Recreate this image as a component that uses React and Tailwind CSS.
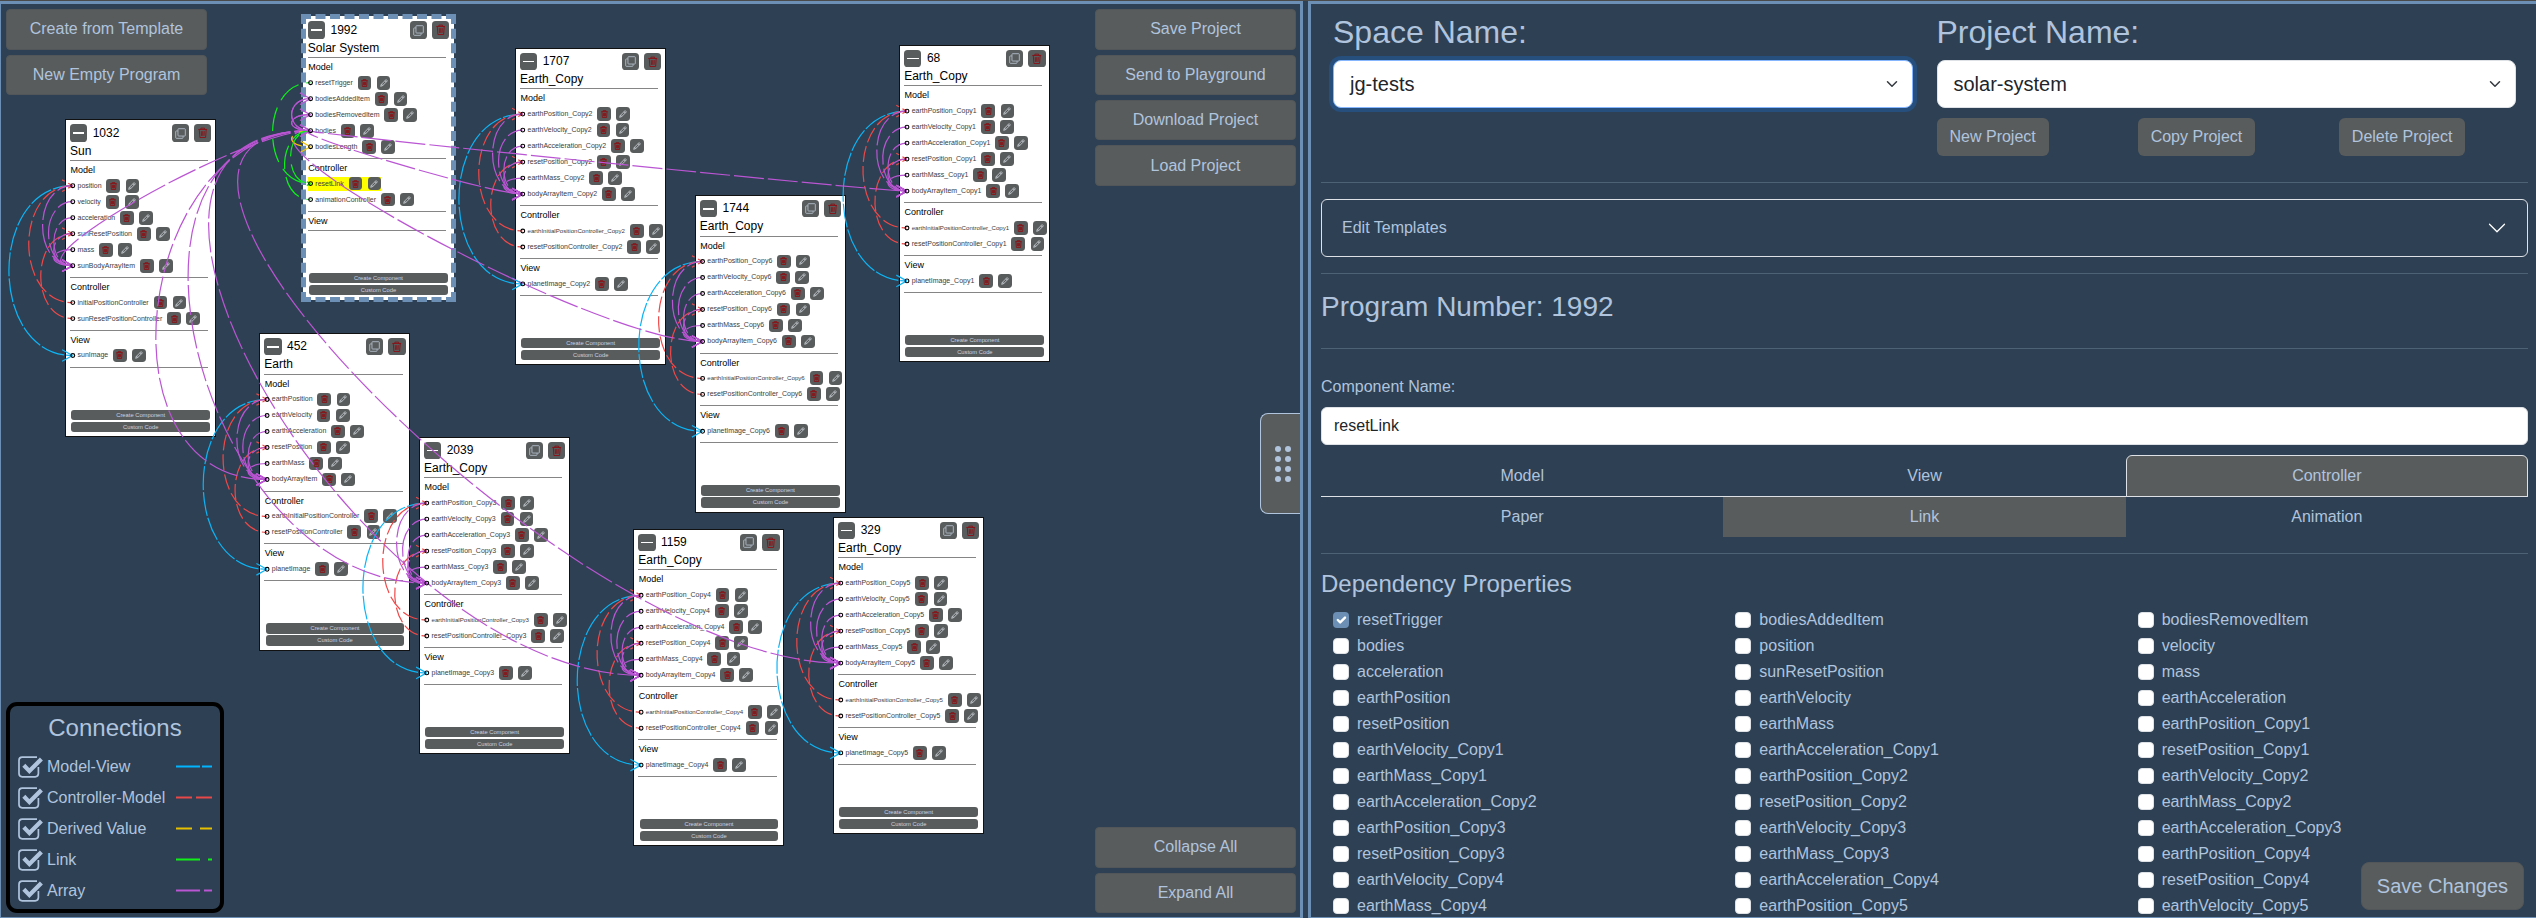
import React from "react";

const earthModel = (s) => [
  "earthPosition" + s,
  "earthVelocity" + s,
  "earthAcceleration" + s,
  "resetPosition" + s,
  "earthMass" + s,
  "bodyArrayItem" + s,
];

const earthCard = (id, title, x, y, s) => ({
  id,
  title,
  x,
  y,
  model: earthModel(s),
  controller: ["earthInitialPositionController" + s, "resetPositionController" + s],
  view: ["planetImage" + s],
});

const cards = [
  {
    id: "1032",
    title: "Sun",
    x: 65,
    y: 119.4,
    model: ["position", "velocity", "acceleration", "sunResetPosition", "mass", "sunBodyArrayItem"],
    controller: ["initialPositionController", "sunResetPositionController"],
    view: ["sunImage"],
  },
  {
    id: "1992",
    title: "Solar System",
    x: 302.8,
    y: 16.4,
    model: ["resetTrigger", "bodiesAddedItem", "bodiesRemovedItem", "bodies", "bodiesLength"],
    controller: ["resetLink", "animationController"],
    view: [],
    selected: true,
    active: "resetLink",
  },
  earthCard("1707", "Earth_Copy", 515, 47.8, "_Copy2"),
  earthCard("68", "Earth_Copy", 899.2, 44.8, "_Copy1"),
  earthCard("1744", "Earth_Copy", 694.8, 195.2, "_Copy6"),
  earthCard("452", "Earth", 259.3, 333.2, ""),
  earthCard("2039", "Earth_Copy", 419, 436.8, "_Copy3"),
  earthCard("1159", "Earth_Copy", 633.3, 529, "_Copy4"),
  earthCard("329", "Earth_Copy", 833, 516.8, "_Copy5"),
];

const ports = {};
cards.forEach((c) => {
  let top = c.y + 41;
  [c.model, c.controller, c.view].forEach((rows) => {
    rows.forEach((name, i) => {
      ports[name] = { x: c.x + 7.6, y: top + 25.3 + 16 * i };
    });
    top += rows.length ? 20.9 + 16 * rows.length : 19;
  });
});

const kinds = {
  mv: { color: "#0db4f5", dash: "24 2", offset: 4 },
  cm: { color: "#f04848", dash: "16 4", offset: 11 },
  dv: { color: "#f5c400", dash: "16 8", offset: 5 },
  link: { color: "#0cf01c", dash: "24 8", offset: 20 },
  array: { color: "#ba55d3", dash: "30 4", offset: 14 },
};

const links = [];
cards.forEach((c) => {
  if (c.selected) return;
  const target = c.model[5];
  links.push(["mv", c.model[0], c.view[0]]);
  links.push(["cm", c.controller[0], c.model[0]]);
  links.push(["cm", c.controller[1], c.model[3]]);
  c.model.slice(0, 5).forEach((m) => links.push(["array", m, target]));
  links.push(["array", "bodies", target]);
});
links.push(
  ["dv", "bodies", "bodiesLength"],
  ["link", "resetTrigger", "resetLink"],
  ["link", "bodies", "resetLink"],
  ["link", "animationController", "bodies"],
  ["array", "bodiesAddedItem", "bodies"],
  ["array", "bodiesRemovedItem", "bodies"],
  ["array", "bodies", "bodiesAddedItem"],
  ["array", "bodies", "bodiesRemovedItem"]
);

function Wires() {
  return (
    <svg className="pointer-events-none absolute inset-0 h-full w-full" viewBox="1 4 1299 913" fill="none" strokeWidth="1.2">
      {links.map(([kind, from, to], i) => {
        const a = ports[from];
        const b = ports[to];
        const k = kinds[kind];
        const d = Math.max(Math.abs(b.y - a.y) / 2, 25);
        return (
          <g key={i} stroke={k.color} strokeDasharray={k.dash} strokeDashoffset={k.offset}>
            <path d={`M${a.x} ${a.y}C${a.x - d} ${a.y} ${b.x - d} ${b.y} ${b.x} ${b.y}`} />
            <path d={`M${b.x} ${b.y}L${b.x - 10.5} ${b.y - 5.8}M${b.x} ${b.y}L${b.x - 10.5} ${b.y + 5.8}`} />
          </g>
        );
      })}
      {Object.entries(ports).map(([name, p]) => (
        <circle key={name} cx={p.x + 0.2} cy={p.y} r="1.9" stroke="#000" strokeWidth="1.1" />
      ))}
    </svg>
  );
}

function Trash({ className, heavy }) {
  return (
    <svg viewBox="1 0 14 16" className={className} fill="none" stroke="#8b0f14" strokeWidth={heavy ? 1.7 : 1.3}>
      <path d="M1.5 3.2h13M5.3 3V1.2h5.4V3M2.9 3.4l.9 11.6h8.4l.9-11.6M5.8 5.6l.3 7M8 5.6v7M10.2 5.6l-.3 7" />
    </svg>
  );
}

function Copy({ className }) {
  return (
    <svg viewBox="0 0 16 16" className={className} fill="none" stroke="#c3d0e0" strokeWidth="1.1">
      <rect x="4.3" y="1" width="10.7" height="10.7" rx="1" />
      <path d="M4 4.3H2a1 1 0 0 0-1 1V14a1 1 0 0 0 1 1h8.7a1 1 0 0 0 1-1v-2" />
    </svg>
  );
}

function Pencil({ className }) {
  return (
    <svg viewBox="0 0 16 16" className={className} fill="none" stroke="#e4eaf2" strokeWidth="1.4" strokeLinejoin="round">
      <path d="M12.2 1.2l2.6 2.6L5.4 13.2l-4 1.4 1.4-4zM10 3.6l2.5 2.5M3.2 10.4l2.4 2.4" />
    </svg>
  );
}

function Row({ name, active }) {
  const small = name.startsWith("earthInitial") && name.includes("_");
  return (
    <div className="flex h-4 items-center">
      <div className={"flex h-[14px] items-center " + (active ? "bg-[#ffff00]" : "")}>
        <span className={"ml-[7.5px] whitespace-nowrap leading-[14px] text-[#3c3c3c] " + (small ? "text-[6.12px]" : "text-[7px]")}>{name}</span>
        <span className="ml-[4.8px] flex h-[13.8px] w-[13.8px] shrink-0 items-center justify-center rounded-[3.4px] bg-[#595c5c]">
          <Trash heavy className="h-[8px] w-[7px]" />
        </span>
        <span className="ml-[5.3px] flex h-[13.8px] w-[13.8px] shrink-0 items-center justify-center rounded-[3.4px] bg-[#595c5c]">
          <Pencil className="h-[8px] w-[8px]" />
        </span>
      </div>
    </div>
  );
}

function Section({ label, rows, active }) {
  return (
    <div className={rows.length ? "pb-[3.1px]" : "pb-[1.2px]"}>
      <div className="h-px w-[138.3px] bg-[#858585]" />
      <div className="h-[16.8px] pl-[0.4px] text-[9px] leading-[18px] text-black">{label}</div>
      {rows.map((r) => (
        <Row key={r} name={r} active={r === active} />
      ))}
    </div>
  );
}

function Card({ card }) {
  const tile = "flex h-[17.3px] w-[17.3px] items-center justify-center rounded-[3.6px] bg-[#595c5c]";
  return (
    <div
      className={"absolute w-[151px] border bg-white pb-[4px] pl-1 pt-[4px] " + (card.selected ? "border-white" : "border-[#111]")}
      style={{ left: card.x - 1, top: card.y - 4 }}
    >
      <div className="flex h-[17.3px] items-center pr-[3.6px]">
        <span className={tile}>
          <span className="h-[1.6px] w-[11.5px] bg-white" />
        </span>
        <span className="ml-[5.4px] flex-1 text-[12px] leading-[17px] text-black">{card.id}</span>
        <span className={tile}>
          <Copy className="h-[11px] w-[11px]" />
        </span>
        <span className={tile + " ml-[5px]"}>
          <Trash className="h-[11.5px] w-[9.5px]" />
        </span>
      </div>
      <div className="h-[18.2px] text-[12px] leading-[19.4px] text-black">{card.title}</div>
      <Section label="Model" rows={card.model} />
      <Section label="Controller" rows={card.controller} active={card.active} />
      <Section label="View" rows={card.view} />
      <div className="h-px w-[138.3px] bg-[#858585]" />
      <div className="ml-[1.3px] mt-[42px] flex w-[138.8px] flex-col gap-[1.7px] text-center text-[5.8px] leading-[10px] text-[#c9d4e2]">
        <div className="h-[10.3px] rounded-[3px] bg-[#595c5c]">Create Component</div>
        <div className="h-[10.3px] rounded-[3px] bg-[#595c5c]">Custom Code</div>
      </div>
      {card.selected && <div className="absolute -inset-[3px] border-[5px] border-dashed border-[#6b8fb5]" />}
    </div>
  );
}

function SideButton({ children, className }) {
  return (
    <div className={"flex h-[40.4px] items-center justify-center rounded border border-[#525658] bg-[#595c5c] text-base text-[#b0c4de] " + (className || "")}>
      {children}
    </div>
  );
}

const legend = [
  ["Model-View", "#00b4ff", "24 2"],
  ["Controller-Model", "#e84848", "16 4"],
  ["Derived Value", "#e6bf00", "16 8"],
  ["Link", "#10f018", "24 8"],
  ["Array", "#ba55d3", "24 4"],
];

function Legend() {
  return (
    <div className="h-[211px] w-[218px] rounded-[11px] border-4 border-black px-2 pt-[6px]">
      <div className="text-center text-2xl leading-8 text-[#b0c4de]">Connections</div>
      <div className="mt-[7px] flex flex-col">
        {legend.map(([name, color, dash]) => (
          <div key={name} className="flex h-[31px] items-center">
            <svg className="h-[22px] w-[26px]" viewBox="0 0 26 22" fill="none" stroke="#b0c4de">
              <path d="M19 1.2H4.2a3.2 3.2 0 0 0-3.2 3.2v13.2a3.2 3.2 0 0 0 3.2 3.2h13a3.2 3.2 0 0 0 3.2-3.2V11" strokeWidth="1.7" />
              <path d="M5.8 9.3l5.6 5.8L23.4 3" strokeWidth="4.2" />
            </svg>
            <span className="ml-[3px] flex-1 text-base leading-6 text-[#b0c4de]">{name}</span>
            <svg className="h-3 w-9" viewBox="0 0 36 12">
              <path d="M0 5.5H36" stroke={color} strokeWidth="2" strokeDasharray={dash} />
            </svg>
          </div>
        ))}
      </div>
    </div>
  );
}

function Canvas() {
  return (
    <div className="relative w-[1303px] shrink-0 overflow-hidden border-b border-l border-r-[3px] border-t-[3px] border-[#6b8fb5]">
      {cards.map((c) => (
        <Card key={c.id} card={c} />
      ))}
      <Wires />
      <div className="absolute inset-0 flex justify-between pb-1 pl-[5px] pr-1 pt-[5.3px]">
        <div className="flex flex-col justify-between">
          <div className="flex w-[201px] flex-col gap-[5px]">
            <SideButton>Create from Template</SideButton>
            <SideButton>New Empty Program</SideButton>
          </div>
          <Legend />
        </div>
        <div className="flex w-[201px] flex-col gap-[5px]">
          <SideButton>Save Project</SideButton>
          <SideButton>Send to Playground</SideButton>
          <SideButton>Download Project</SideButton>
          <SideButton>Load Project</SideButton>
          <SideButton className="mt-auto">Collapse All</SideButton>
          <SideButton>Expand All</SideButton>
        </div>
      </div>
      <div className="absolute right-0 top-[409px] flex h-[101px] w-10 items-center rounded-l-lg border border-r-0 border-[#b0c4de] bg-[#595c5c] pl-[14px]">
        <div className="grid grid-cols-2 gap-x-[4px] gap-y-[4px]">
          {Array.from({ length: 8 }, (_, i) => (
            <span key={i} className="h-[6px] w-[6px] rounded-full bg-[#b0c4de]" />
          ))}
        </div>
      </div>
    </div>
  );
}

function Rule({ className }) {
  return <div className={"h-px shrink-0 bg-[#4e6276] " + className} />;
}

function Select({ value, focused }) {
  return (
    <div
      className={
        "flex h-12 items-center justify-between rounded-lg border bg-white pl-4 pr-3 text-xl text-[#212529] " +
        (focused ? "border-[#86b7fe] shadow-[0_0_0_4px_#264f7d]" : "border-[#dee2e6]")
      }
    >
      <span>{value}</span>
      <svg className="h-3 w-4" viewBox="0 0 16 16" fill="none" stroke="#343a40" strokeWidth="2" strokeLinecap="round" strokeLinejoin="round">
        <path d="m2 5 6 6 6-6" />
      </svg>
    </div>
  );
}

const properties = [
  "resetTrigger", "bodiesAddedItem", "bodiesRemovedItem",
  "bodies", "position", "velocity",
  "acceleration", "sunResetPosition", "mass",
  "earthPosition", "earthVelocity", "earthAcceleration",
  "resetPosition", "earthMass", "earthPosition_Copy1",
  "earthVelocity_Copy1", "earthAcceleration_Copy1", "resetPosition_Copy1",
  "earthMass_Copy1", "earthPosition_Copy2", "earthVelocity_Copy2",
  "earthAcceleration_Copy2", "resetPosition_Copy2", "earthMass_Copy2",
  "earthPosition_Copy3", "earthVelocity_Copy3", "earthAcceleration_Copy3",
  "resetPosition_Copy3", "earthMass_Copy3", "earthPosition_Copy4",
  "earthVelocity_Copy4", "earthAcceleration_Copy4", "resetPosition_Copy4",
  "earthMass_Copy4", "earthPosition_Copy5", "earthVelocity_Copy5",
];

function Editor() {
  return (
    <div className="relative flex min-w-0 flex-1 flex-col overflow-hidden border-b border-l-[3px] border-t-[3px] border-[#6b8fb5] pl-[10px] pr-2">
      <div className="grid h-[178px] shrink-0 grid-cols-2">
        <div className="px-3 pt-[9px]">
          <div className="mb-2 text-[32px] leading-[39px]">Space Name:</div>
          <Select value="jg-tests" focused />
        </div>
        <div className="pt-[9px]">
          <div className="px-3">
            <div className="mb-2 text-[32px] leading-[39px]">Project Name:</div>
            <Select value="solar-system" />
          </div>
          <div className="mt-[10px] grid grid-cols-3">
            {["New Project", "Copy Project", "Delete Project"].map((t) => (
              <div key={t} className="pl-3">
                <span className="inline-flex h-[38px] items-center rounded-md bg-[#595c5c] px-[13px] text-base">{t}</span>
              </div>
            ))}
          </div>
        </div>
      </div>
      <Rule className="" />
      <div className="mt-4 flex h-[58px] shrink-0 items-center justify-between rounded-md border border-[#dee2e6] pl-5 pr-5">
        <span className="text-base">Edit Templates</span>
        <svg className="h-5 w-5" viewBox="0 0 16 16" fill="white">
          <path fillRule="evenodd" d="M1.646 4.646a.5.5 0 0 1 .708 0L8 10.293l5.646-5.647a.5.5 0 0 1 .708.708l-6 6a.5.5 0 0 1-.708 0l-6-6a.5.5 0 0 1 0-.708z" />
        </svg>
      </div>
      <Rule className="mt-4" />
      <div className="mt-4 text-[28px] leading-[33.6px]">Program Number: 1992</div>
      <Rule className="mt-[24px]" />
      <div className="mt-[26px] text-base leading-6">Component Name:</div>
      <div className="mt-[8.4px] flex h-[38px] shrink-0 items-center rounded-md border border-[#dee2e6] bg-white pl-3 text-base text-[#212529]">resetLink</div>
      <div className="mt-[10px] grid h-[42px] shrink-0 grid-cols-3 border-b border-[#dee2e6] text-center text-base leading-[41px]">
        <span>Model</span>
        <span>View</span>
        <span className="-mb-px rounded-t-md border border-[#dee2e6] bg-[#595c5c] leading-[39px]">Controller</span>
      </div>
      <div className="grid h-10 shrink-0 grid-cols-3 text-center text-base leading-10">
        <span>Paper</span>
        <span className="bg-[#595c5c]">Link</span>
        <span>Animation</span>
      </div>
      <Rule className="mt-4" />
      <div className="mt-[15.4px] text-2xl leading-[29px]">Dependency Properties</div>
      <div className="mt-[8.5px] grid shrink-0 grid-cols-3 text-base">
        {properties.map((p, i) => (
          <div key={p} className="flex h-[26px] items-center pl-3 leading-6">
            {i === 0 ? (
              <span className="h-4 w-4 rounded bg-[#6b8fb5]">
                <svg viewBox="0 0 20 20" className="h-4 w-4" fill="none" stroke="#fff" strokeWidth="3" strokeLinecap="round" strokeLinejoin="round">
                  <path d="m6 10 3 3 6-6" />
                </svg>
              </span>
            ) : (
              <span className="h-4 w-4 rounded border border-[#dee2e6] bg-white" />
            )}
            <span className="ml-2">{p}</span>
          </div>
        ))}
      </div>
      <div className="absolute bottom-[7px] right-3 flex h-12 items-center rounded-lg border border-[#525658] bg-[#595c5c] px-[15px] text-xl">Save Changes</div>
    </div>
  );
}

export default function App() {
  return (
    <div className="flex h-[918px] w-[2536px] flex-col overflow-hidden bg-[#2e4053] font-['Liberation_Sans',Arial,sans-serif] text-[#b0c4de]">
      <div className="h-px shrink-0 bg-[#4a4a4a]" />
      <div className="flex min-h-0 flex-1 gap-[5px]">
        <Canvas />
        <Editor />
      </div>
    </div>
  );
}
